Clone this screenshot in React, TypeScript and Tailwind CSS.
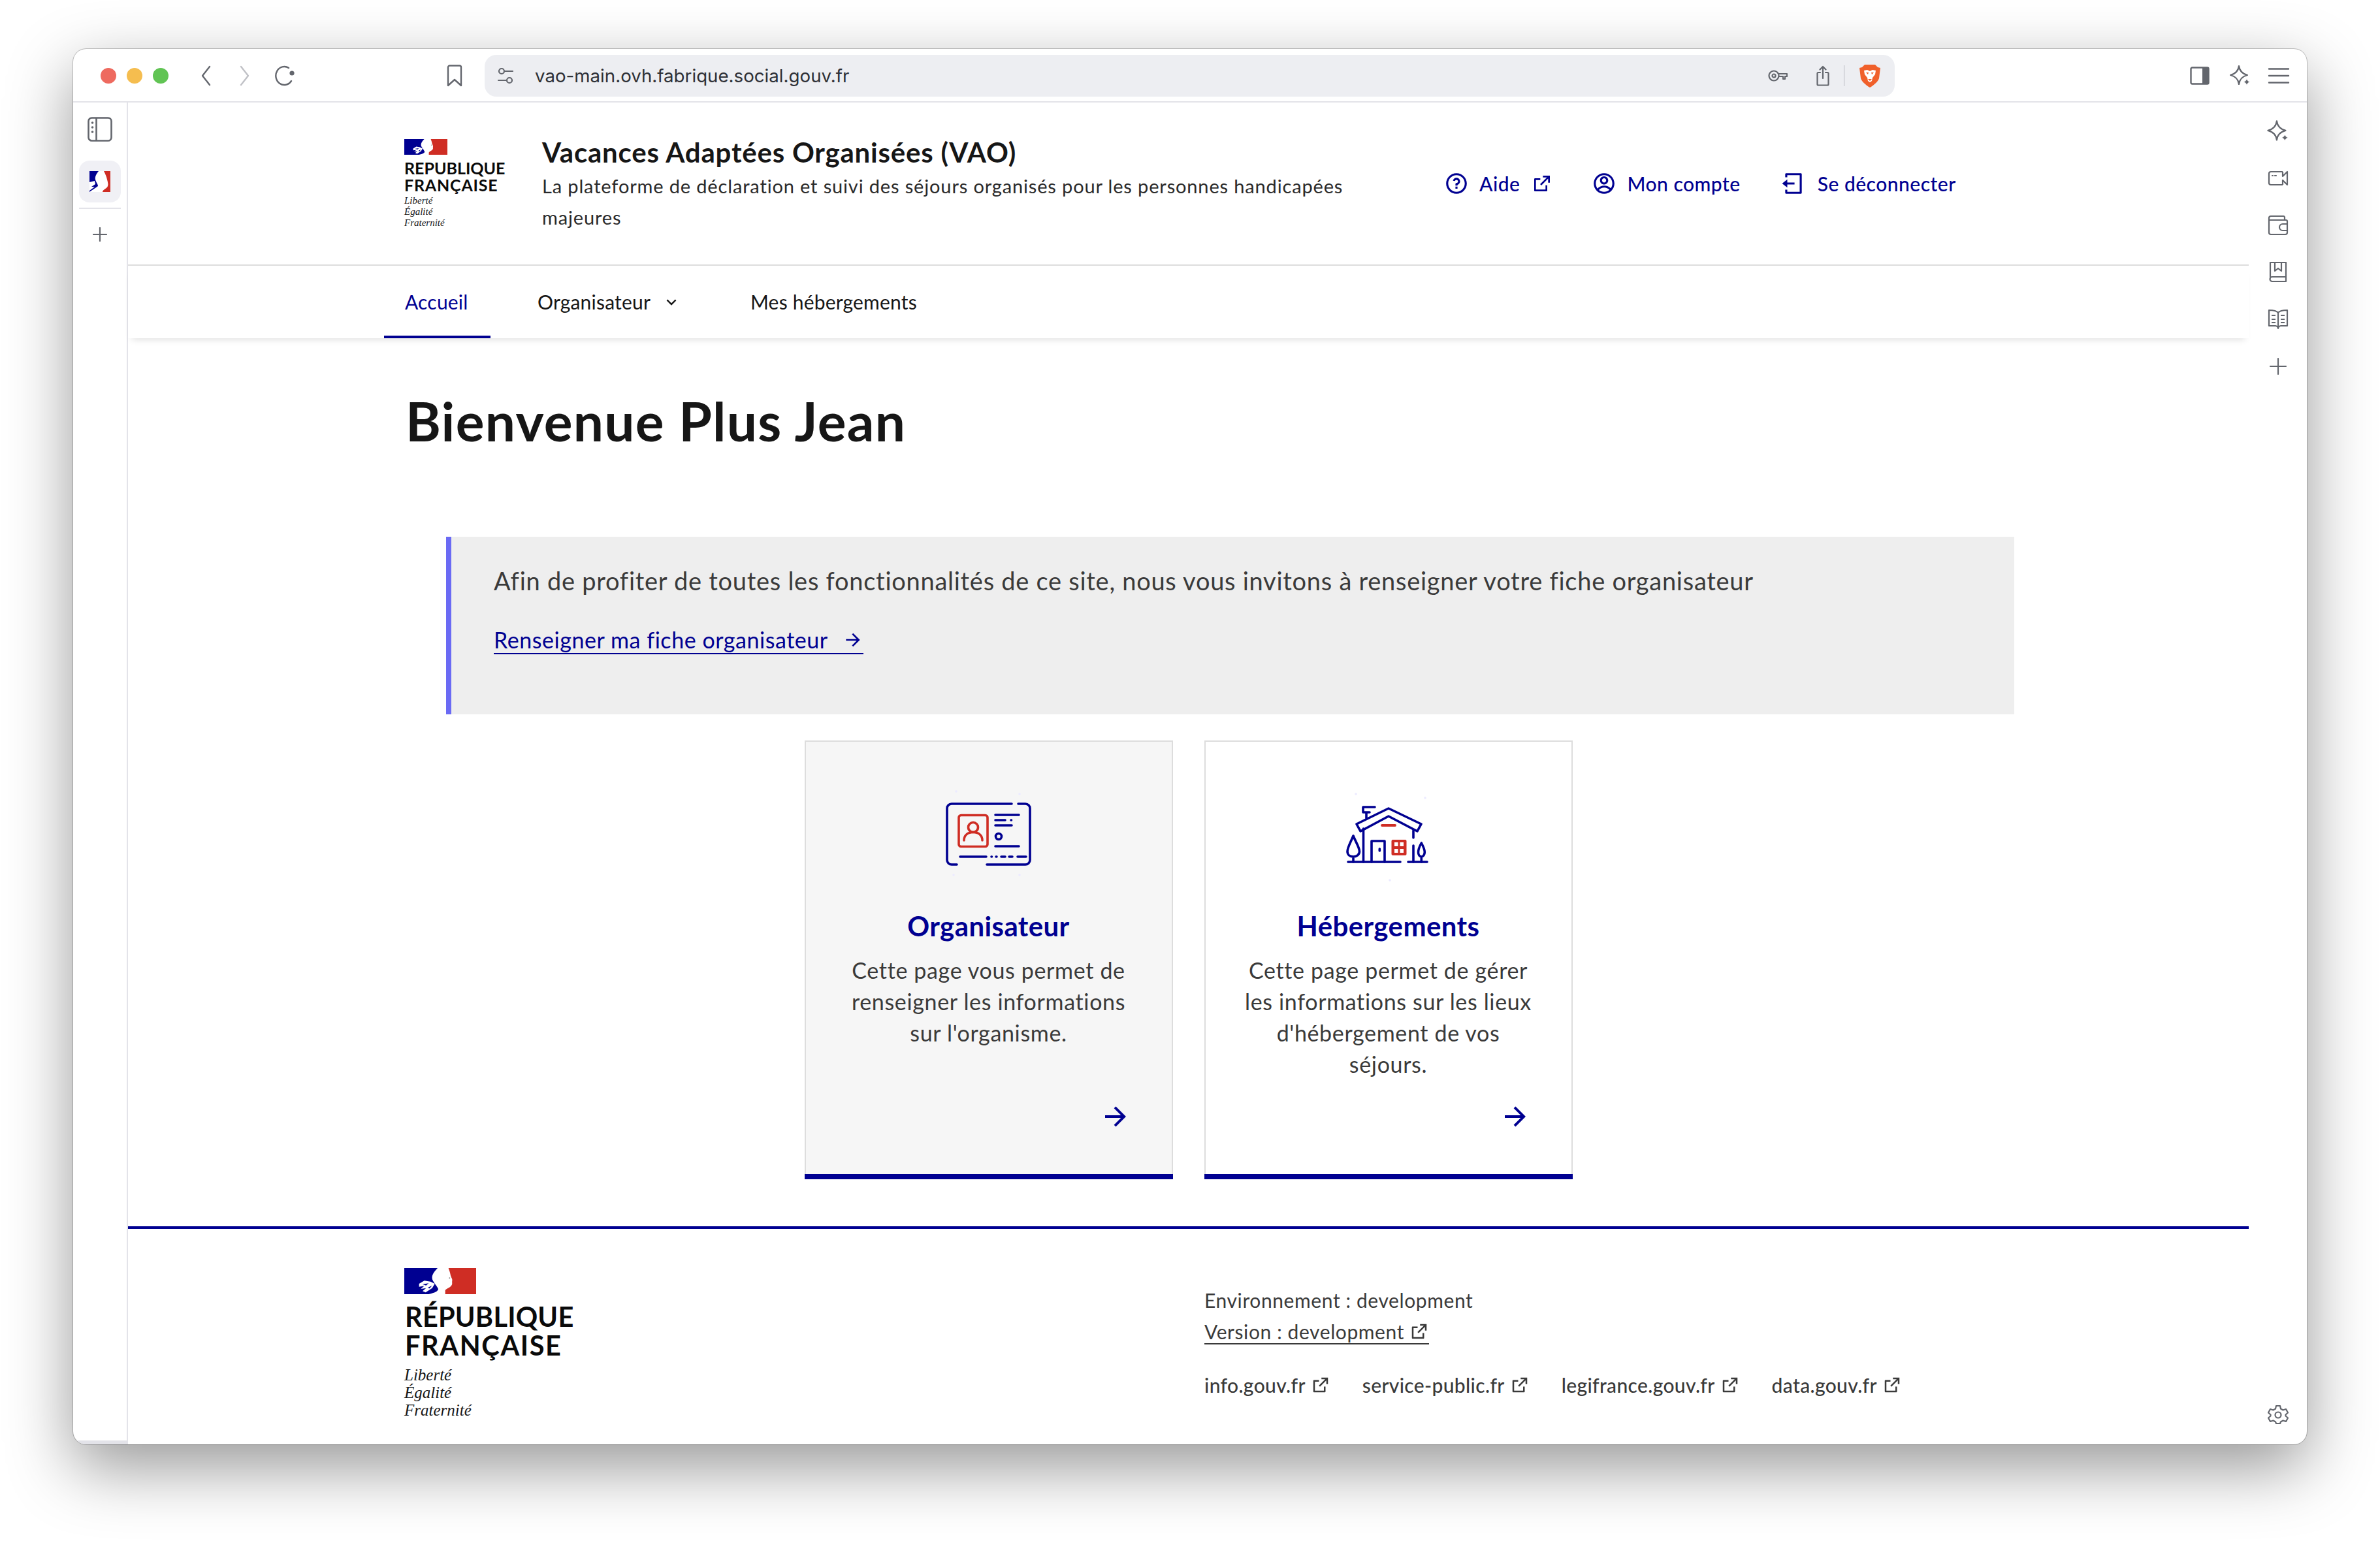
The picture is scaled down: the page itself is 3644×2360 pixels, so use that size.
import React from "react";
import {
  RiExternalLinkLine,
  RiQuestionLine,
  RiAccountCircleLine,
  RiLogoutBoxLine,
  RiArrowRightLine,
  RiArrowDownSLine,
} from "react-icons/ri";

const G = "#63666d";

function Flag({ className }: { className?: string }) {
  return (
    <svg viewBox="0 0 330 120" className={className} preserveAspectRatio="none">
      <rect width="330" height="120" fill="#fff" />
      <path d="M0 0H153C136 18 126 32 128 48C130 62 146 76 156 96C156 106 140 114 112 120H0Z" fill="#000091" />
      <path d="M203 0H330V120H188V102C196 92 212 90 218 78C222 72 218 66 220 58C222 50 214 42 212 30C210 18 206 10 203 0Z" fill="#cf2d24" />
      <path d="M68 72L92 58L120 62L140 72L128 92L98 112L84 106L100 92L76 96L92 82L68 86Z" fill="#fff" />
      <path d="M84 74L112 70L100 80Z M108 90L128 80L116 94Z" fill="#000091" />
      <circle cx="208" cy="46" r="3" fill="#8a8a8a" />
    </svg>
  );
}

function Logo({ small }: { small?: boolean }) {
  if (small) {
    return (
      <div className="flex flex-col">
        <Flag className="block w-[66px] h-[24px]" />
        <div className="mt-[7px] font-['Lato',sans-serif] font-bold text-[25px] leading-[26px] text-[#0a0a0a]">
          <div>REPUBLIQUE</div>
          <div className="tracking-[0.8px]">FRANÇAISE</div>
        </div>
        <div className="mt-[3px] font-['Liberation_Serif',serif] italic text-[15px] leading-[17px] text-[#161616]">
          <div>Liberté</div>
          <div>Égalité</div>
          <div>Fraternité</div>
        </div>
      </div>
    );
  }
  return (
    <div className="flex flex-col">
      <Flag className="block w-[110px] h-[40px]" />
      <div className="mt-[12px] ml-[1px] font-['Lato',sans-serif] font-bold text-[41.5px] leading-[44px] text-[#0a0a0a]">
        <div className="tracking-[0.2px]">RÉPUBLIQUE</div>
        <div className="tracking-[1.6px]">FRANÇAISE</div>
      </div>
      <div className="mt-[10px] font-['Liberation_Serif',serif] italic text-[25px] leading-[27px] text-[#161616]">
        <div>Liberté</div>
        <div>Égalité</div>
        <div>Fraternité</div>
      </div>
    </div>
  );
}

function IdCardPicto() {
  const b = { fill: "none", stroke: "#000091", strokeWidth: 3.6, strokeLinecap: "round" as const, strokeLinejoin: "round" as const };
  return (
    <svg viewBox="0 0 160 160" className="block w-[160px] h-[160px]">
      <g {...b}>
        <path d="M115 33H23a7 7 0 0 0-7 7V119a7 7 0 0 0 7 7H31" />
        <path d="M77 126H136a7 7 0 0 0 7-7V40a7 7 0 0 0-7-7H125" />
        <path d="M90 50H126M90 58H105M114 58H114.5M90 66H115M90 98H126" />
        <circle cx="95" cy="83" r="4.5" />
        <path d="M36 114H76M84 114H84.5M91 114H92M99 114H105M111 114H116M124 114H137" />
      </g>
      <g fill="none" stroke="#cf2d24" strokeWidth="3.6" strokeLinecap="round" strokeLinejoin="round">
        <rect x="34" y="50.5" width="44" height="48" rx="3.5" />
        <circle cx="56" cy="69" r="7.5" />
        <path d="M42 89C42 81 48 76.5 56 76.5C64 76.5 70 81 70 89" />
      </g>
      <g fill="#ecebff">
        <circle cx="30" cy="14" r="1.8" />
        <circle cx="127" cy="18" r="1.8" />
        <circle cx="26" cy="142" r="1.8" />
        <circle cx="127" cy="142" r="1.8" />
      </g>
    </svg>
  );
}

function HousePicto() {
  const b = { fill: "none", stroke: "#000091", strokeWidth: 3.6, strokeLinecap: "round" as const, strokeLinejoin: "round" as const };
  return (
    <svg viewBox="0 0 160 160" className="block w-[160px] h-[160px]">
      <g {...b}>
        <path d="M80 40L130 64L124 75L80 52L37 75L31 64Z" />
        <path d="M41.5 71V122M118 74V85M118 97V122" />
        <path d="M18 122H98M110 122H139" />
        <path d="M54 122V90H74V122" />
        <path d="M66.3 102V105" />
        <path d="M59 38H41V46H51M46 46V55" />
        <path d="M26 82C22 92 17 100 17 106C17 111 21 114 26 114C31 114 35.5 111 35.5 106C35.5 100 30 92 26 82ZM26 114V122" />
        <path d="M130.3 93C127 99 125.5 103 125.5 107C125.5 111 127.5 114 130.3 114C133 114 135.3 111 135.3 107C135.3 103 133.5 99 130.3 93ZM130.3 114V122" />
      </g>
      <path d="M70 66H90" stroke="#cf2d24" strokeWidth="3.8" strokeLinecap="round" />
      <rect x="84.5" y="88" width="23" height="24" rx="2" fill="#cf2d24" />
      <g fill="#fff">
        <rect x="89" y="92" width="5.5" height="6" />
        <rect x="97.5" y="92" width="5.5" height="6" />
        <rect x="89" y="102" width="5.5" height="6" />
        <rect x="97.5" y="102" width="5.5" height="6" />
      </g>
      <g fill="#ecebff">
        <circle cx="30" cy="18" r="1.8" />
        <circle cx="136" cy="24" r="1.8" />
        <circle cx="82" cy="150" r="1.8" />
      </g>
    </svg>
  );
}

function Sparkle({ className }: { className?: string }) {
  return (
    <svg viewBox="0 0 34 34" className={className} fill="none" stroke={G} strokeWidth="2.2" strokeLinejoin="round">
      <path d="M15 2C16 10 20 14 28 16C20 18 16 22 15 30C14 22 10 18 2 16C10 14 14 10 15 2Z" />
      <path d="M27 20.5C27.5 24 29 25.500 32.500 26.500C29 27.500 27.500 29 27 32.500C26.500 29 25 27.500 21.500 26.500C25 25.500 26.500 24 27 20.5Z" fill={G} stroke="#fff" strokeWidth="1" />
    </svg>
  );
}

function Card({
  picto,
  title,
  text,
  bg,
}: {
  picto: React.ReactNode;
  title: string;
  text: string[];
  bg: string;
}) {
  return (
    <div className={`box-border w-[564px] h-[672px] border-2 border-b-0 border-[#dddddd] flex flex-col items-center relative ${bg}`}>
      <div className="mt-[62px]">{picto}</div>
      <div className="mt-[34px] text-[42px] leading-[52px] font-bold text-[#000091] tracking-[0.4px]">{title}</div>
      <div className="mt-[18px] text-center text-[34px] leading-[48px] text-[#3a3a3a] tracking-[0.65px]">
        {text.map((t) => (
          <div key={t}>{t}</div>
        ))}
      </div>
      <RiArrowRightLine className="absolute right-[62px] bottom-[72px] w-[48px] h-[48px] text-[#000091]" />
      <div className="absolute left-[-2px] right-[-2px] bottom-0 h-[8px] bg-[#000091]" />
    </div>
  );
}

function Ext({ className }: { className?: string }) {
  return <RiExternalLinkLine className={className} />;
}

export default function App() {
  return (
    <div className="w-[3644px] h-[2360px] bg-white pl-[112px] pt-[75px] overflow-hidden font-['Lato',sans-serif]">
      <div className="w-[3420px] h-[2137px] bg-white rounded-[20px] overflow-hidden flex flex-col shadow-[0_0_0_1px_rgba(0,0,0,0.22),0_35px_100px_rgba(0,0,0,0.41)]">
        {/* Browser toolbar */}
        <div className="box-border h-[82px] pt-[2px] border-b-2 border-[#e3e3e9] flex items-center shrink-0">
          <div className="ml-[42px] flex gap-[16px]">
            <div className="w-[24px] h-[24px] rounded-full bg-[#ee6a5f]" />
            <div className="w-[24px] h-[24px] rounded-full bg-[#f5bd4f]" />
            <div className="w-[24px] h-[24px] rounded-full bg-[#61c454]" />
          </div>
          <svg viewBox="0 0 16 32" className="ml-[49px] w-[16px] h-[32px]" fill="none" stroke={G} strokeWidth="2.4" strokeLinecap="round" strokeLinejoin="round">
            <path d="M14 2L3 16L14 30" />
          </svg>
          <svg viewBox="0 0 16 32" className="ml-[44px] w-[16px] h-[32px]" fill="none" stroke="#c0c1c6" strokeWidth="2.4" strokeLinecap="round" strokeLinejoin="round">
            <path d="M2 2L13 16L2 30" />
          </svg>
          <svg viewBox="0 0 32 32" className="ml-[37px] w-[32px] h-[32px]" fill="none" stroke={G} strokeWidth="2.4" strokeLinecap="round">
            <path d="M26 24A13 14 0 1 1 22 4" />
            <circle cx="27" cy="12" r="3.600" fill={G} stroke="none" />
          </svg>
          <svg viewBox="0 0 24 34" className="ml-[232px] w-[24px] h-[34px]" fill="none" stroke={G} strokeWidth="2.4" strokeLinejoin="round">
            <path d="M2 4A2.500 2.500 0 0 1 4.500 1.500H19.500A2.500 2.500 0 0 1 22 4V32L12 23L2 32Z" />
          </svg>
          {/* URL bar */}
          <div className="ml-[34px] w-[2159px] h-[64px] rounded-[18px] bg-[#edeef2] flex items-center">
            <svg viewBox="0 0 26 26" className="ml-[19px] w-[26px] h-[26px]" fill="none" stroke={G} strokeWidth="2.2" strokeLinecap="round">
              <circle cx="7" cy="6" r="4" />
              <path d="M11 6H24M2 20H15" />
              <circle cx="19" cy="20" r="4" />
            </svg>
            <div className="ml-[32px] font-['Inter',sans-serif] text-[27.7px] leading-[32px] text-[#2e3036]">vao-main.ovh.fabrique.social.gouv.fr</div>
            <svg viewBox="0 0 30 22" className="ml-auto w-[30px] h-[22px]" fill="none" stroke={G} strokeWidth="2.2" strokeLinejoin="round">
              <circle cx="9" cy="11" r="7.500" />
              <circle cx="9" cy="11" r="2.500" />
              <path d="M16 8H29V12H26V16H23V12H16" />
            </svg>
            <svg viewBox="0 0 20 32" className="ml-[44px] w-[20px] h-[32px]" fill="none" stroke={G} strokeWidth="2.2" strokeLinecap="round" strokeLinejoin="round">
              <path d="M6 11H3A1.500 1.500 0 0 0 1.500 12.500V29A1.500 1.500 0 0 0 3 30.500H17A1.500 1.500 0 0 0 18.500 29V12.500A1.500 1.500 0 0 0 17 11H14M10 20V2M5.500 6.500L10 2L14.500 6.500" />
            </svg>
            <div className="ml-[22px] w-[1px] h-[32px] bg-[#b9bac0]" />
            <svg viewBox="0 0 34 36" className="ml-[22px] mr-[21px] w-[34px] h-[36px]">
              <path d="M9 1H25L29 5L33 6L31 22C30 26 24 32 17 36C10 32 4 26 3 22L1 6L5 5Z" fill="#f0602b" />
              <path d="M8 10L13 9L17 11L21 9L26 10L25 16L21 21L20 26L17 28L14 26L13 21L9 16Z" fill="#fff" />
              <path d="M14 23H20L17 26Z" fill="#f0602b" />
              <path d="M11 13H15L14 16ZM23 13H19L20 16Z" fill="#f0602b" />
            </svg>
          </div>
          <svg viewBox="0 0 30 30" className="ml-[452px] w-[30px] h-[30px]" fill="none" stroke={G} strokeWidth="2.4">
            <rect x="1.500" y="2.500" width="27" height="25" rx="2" />
            <rect x="19" y="2.500" width="9.500" height="25" fill={G} stroke="none" />
          </svg>
          <Sparkle className="ml-[30px] w-[34px] h-[34px]" />
          <svg viewBox="0 0 34 26" className="ml-[25px] w-[34px] h-[26px]" fill="none" stroke={G} strokeWidth="2.4" strokeLinecap="round">
            <path d="M2 2.500H32M2 13H32M2 23.500H32" />
          </svg>
        </div>

        <div className="flex-1 flex min-h-0">
          {/* Left sidebar */}
          <div className="box-border w-[84px] shrink-0 border-r-2 border-b-[6px] border-[#e3e3e9] flex flex-col items-center pt-[22px]">
            <svg viewBox="0 0 38 38" className="w-[38px] h-[38px]" fill="none" stroke={G} strokeWidth="2.6">
              <rect x="1.500" y="1.500" width="35" height="35" rx="5" />
              <path d="M13.500 1.500V36.500" />
              <circle cx="7.500" cy="9" r="1.800" fill={G} stroke="none" />
              <circle cx="7.500" cy="16" r="1.800" fill={G} stroke="none" />
              <circle cx="7.500" cy="23" r="1.800" fill={G} stroke="none" />
            </svg>
            <div className="mt-[29px] w-[64px] h-[64px] rounded-[16px] bg-[#f0f0f5] flex items-center justify-center">
              <svg viewBox="0 0 32 32" className="w-[32px] h-[32px]">
                <rect width="32" height="32" fill="#fff" />
                <path d="M0 0H14C11 4 8 8 9 13C10 17 13 20 13 23C9 26 4 29 0 32Z" fill="#000091" />
                <path d="M22 0H32V32H20C20 28 27 27 28 23C29 20 28 17 27 13C26 8 24 4 22 0Z" fill="#cf2d24" />
                <path d="M0 17L8 15L9 20L3 24L8 24L0 30Z" fill="#fff" />
              </svg>
            </div>
            <div className="mt-[8px] w-[64px] h-[2px] bg-[#e3e3e9]" />
            <svg viewBox="0 0 22 22" className="mt-[28px] w-[22px] h-[22px]" fill="none" stroke={G} strokeWidth="2.2" strokeLinecap="round">
              <path d="M11 1V21M1 11H21" />
            </svg>
          </div>

          {/* Page */}
          <div className="flex-1 min-w-0 flex flex-col">
            {/* Header */}
            <div className="box-border h-[250px] shrink-0 border-b-2 border-[#dddddd] flex items-center pl-[423px]">
              <div className="w-[211px] shrink-0">
                <Logo small />
              </div>
              <div className="w-[1382px] shrink-0 pt-[4px]">
                <div className="text-[42px] leading-[48px] font-bold text-[#161616] tracking-[0.8px]">Vacances Adaptées Organisées (VAO)</div>
                <div className="mt-[4px] w-[1260px] text-[29px] leading-[48.500px] text-[#2a2a2a] tracking-[0.85px]">
                  La plateforme de déclaration et suivi des séjours organisés pour les personnes handicapées majeures
                </div>
              </div>
              <div className="flex items-center text-[30px] leading-[38px] tracking-[0.5px] font-medium text-[#000091]">
                <RiQuestionLine className="w-[38px] h-[38px] -ml-[1px]" />
                <span className="ml-[16px]">Aide</span>
                <Ext className="ml-[18px] w-[32px] h-[32px]" />
                <RiAccountCircleLine className="ml-[60px] w-[38px] h-[38px]" />
                <span className="ml-[16px]">Mon compte</span>
                <RiLogoutBoxLine className="ml-[62px] w-[38px] h-[38px]" />
                <span className="ml-[18px]">Se déconnecter</span>
              </div>
            </div>

            {/* Nav */}
            <div className="box-border h-[111px] shrink-0 flex items-stretch pl-[392px] shadow-[0_8px_10px_-6px_rgba(0,0,0,0.13)] text-[30px] tracking-[0.2px] text-[#161616]">
              <div className="box-border w-[163px] border-b-4 pt-[4px] border-[#000091] text-[#000091] pl-[32px] flex items-center">Accueil</div>
              <div className="ml-[40px] pl-[32px] flex items-center">
                Organisateur
                <RiArrowDownSLine className="ml-[18px] w-[28px] h-[28px]" />
              </div>
              <div className="ml-[75px] pl-[32px] flex items-center">Mes hébergements</div>
            </div>

            {/* H1 */}
            <div className="mt-[78px] pl-[425px] h-[96px] text-[82px] leading-[96px] tracking-[1.3px] font-bold text-[#161616] shrink-0">Bienvenue Plus Jean</div>

            {/* Callout */}
            <div className="box-border mt-[130px] ml-[487px] w-[2401px] h-[272px] shrink-0 bg-[#eeeeee] border-l-8 border-[#6a6af4] pl-[65px] pt-[39px]">
              <div className="text-[38px] leading-[56px] tracking-[0.73px] text-[#3a3a3a]">
                Afin de profiter de toutes les fonctionnalités de ce site, nous vous invitons à renseigner votre fiche organisateur
              </div>
              <div className="mt-[43px] inline-flex items-center border-b-2 border-[#000091] text-[34px] leading-[40px] tracking-[0.55px] text-[#000091]">
                Renseigner ma fiche organisateur
                <RiArrowRightLine className="ml-[22px] w-[32px] h-[32px]" />
              </div>
            </div>

            {/* Cards */}
            <div className="mt-[40px] flex justify-center gap-[48px] shrink-0">
              <Card
                bg="bg-[#f6f6f6]"
                picto={<IdCardPicto />}
                title="Organisateur"
                text={["Cette page vous permet de", "renseigner les informations", "sur l'organisme."]}
              />
              <Card
                bg="bg-white"
                picto={<HousePicto />}
                title="Hébergements"
                text={["Cette page permet de gérer", "les informations sur les lieux", "d'hébergement de vos", "séjours."]}
              />
            </div>

            {/* Footer */}
            <div className="mt-[72px] flex-1 min-h-0 border-t-4 border-[#000091] flex pl-[423px]">
              <div className="w-[1225px] shrink-0 pt-[60px]">
                <Logo />
              </div>
              <div className="pt-[85px] text-[30px] leading-[48px] tracking-[0.6px] text-[#3a3a3a]">
                <div>Environnement : development</div>
                <div className="inline-flex items-center h-[38px] border-b-2 border-[#3a3a3a] mt-[4px]">
                  Version : development
                  <Ext className="ml-[8px] w-[30px] h-[30px]" />
                </div>
                <div className="mt-[34px] flex items-center font-medium tracking-[0.35px] text-[#3a3a3a]">
                  <span>info.gouv.fr</span>
                  <Ext className="ml-[8px] w-[30px] h-[30px]" />
                  <span className="ml-[49px]">service-public.fr</span>
                  <Ext className="ml-[8px] w-[30px] h-[30px]" />
                  <span className="ml-[49px]">legifrance.gouv.fr</span>
                  <Ext className="ml-[8px] w-[30px] h-[30px]" />
                  <span className="ml-[49px]">data.gouv.fr</span>
                  <Ext className="ml-[8px] w-[30px] h-[30px]" />
                </div>
              </div>
            </div>
          </div>

          {/* Right sidebar */}
          <div className="w-[89px] shrink-0 flex flex-col items-center pt-[28px] pb-[30px] gap-[40px]">
            <Sparkle className="w-[32px] h-[32px] scale-110" />
            <svg viewBox="0 0 32 32" className="w-[32px] h-[32px]" fill="none" stroke={G} strokeWidth="2.2" strokeLinejoin="round">
              <path d="M23 6H5A3 3 0 0 0 2 9V23A3 3 0 0 0 5 26H23" />
              <path d="M23 6V13L30 6V26L23 19V26" />
              <path d="M7 12H8M11 12H13" strokeLinecap="round" />
            </svg>
            <svg viewBox="0 0 32 32" className="w-[32px] h-[32px]" fill="none" stroke={G} strokeWidth="2.200" strokeLinejoin="round">
              <path d="M26 8V4A2 2 0 0 0 24 2H5A3 3 0 0 0 2 5V27A3 3 0 0 0 5 30H27A3 3 0 0 0 30 27V10A2 2 0 0 0 28 8H2" />
              <path d="M30 14H23A3.500 3.500 0 0 0 23 24H30" />
            </svg>
            <svg viewBox="0 0 32 32" className="w-[32px] h-[32px]" fill="none" stroke={G} strokeWidth="2.200" strokeLinejoin="round">
              <path d="M4 24V1H28V30H7A3 3 0 0 1 7 23H28" />
              <path d="M11 1V14L16 10L21 14V1" />
            </svg>
            <svg viewBox="0 0 32 32" className="w-[32px] h-[32px]" fill="none" stroke={G} strokeWidth="2.200" strokeLinejoin="round">
              <path d="M16 6C13 2 6 2 2 2V26H12C14 26 16 28 16 30C16 28 18 26 20 26H30V2C26 2 19 2 16 6ZM16 6V30" />
              <path d="M6 10H12M6 16H12M6 21H12M20 10H26M20 16H26M20 21H26" />
            </svg>
            <svg viewBox="0 0 32 32" className="w-[32px] h-[32px]" fill="none" stroke={G} strokeWidth="2.200" strokeLinecap="round">
              <path d="M16 4V28M4 16H28" />
            </svg>
            <svg viewBox="0 0 32 32" className="mt-auto w-[32px] h-[32px]" fill="none" stroke={G} strokeWidth="2.200" strokeLinejoin="round">
              <path d="M13 3H19L20 7.500L23.500 9.500L28 8L31 13.500L27.500 16.500V18.500L31 21.500L28 27L23.500 25.500L20 27.500L19 30H13L12 27.500L8.500 25.500L4 27L1 21.500L4.500 18.500V16.500L1 13.500L4 8L8.500 9.500L12 7.500Z" />
              <circle cx="16" cy="17" r="4.500" />
            </svg>
          </div>
        </div>
      </div>
    </div>
  );
}
